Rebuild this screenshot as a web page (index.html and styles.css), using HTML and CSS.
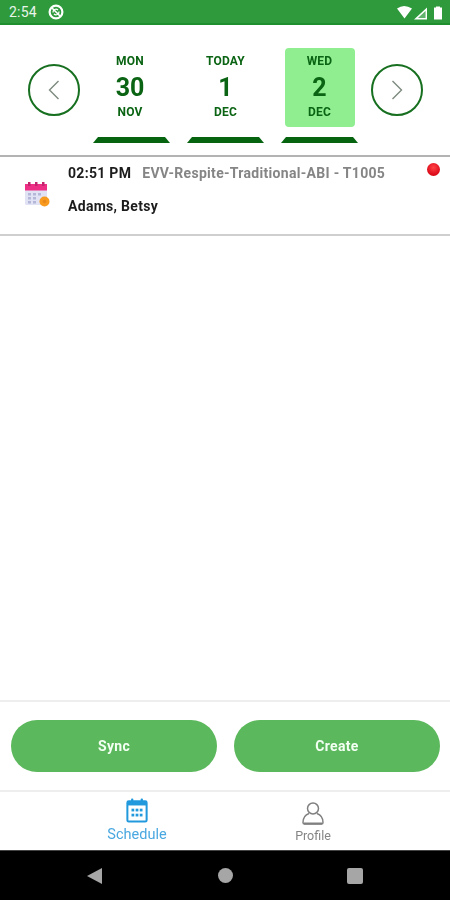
FILE: index.html
```html
<!DOCTYPE html>
<html lang="en">
<head>
<meta charset="utf-8">
<title>Schedule</title>
<link rel="stylesheet" href="styles.css">
</head>
<body>
<div class="screen">
  <div class="status">
    <span class="clock">2:54</span>
    <svg class="dnd" viewBox="0 0 16 16" width="16" height="16"><circle cx="8" cy="8" r="6.4" fill="none" stroke="#fff" stroke-width="2.200"/><path d="M3.500 3.500l9 9" stroke="#fff" stroke-width="1.600"/><path d="M5 8.500a3 3 0 0 1 5-2.500M11 7.500a3 3 0 0 1-5 2.500" fill="none" stroke="#fff" stroke-width="1.300"/></svg>
    <span class="status-fill"></span>
    <svg class="sys" viewBox="0 0 46 16" width="46" height="16"><path d="M1 4.500Q8-0.500 16 4.500L8.500 14.500Z" fill="#fff"/><path d="M31 3.500V15.500H18ZM29.500 7L22 14H29.500Z" fill="#fff" fill-rule="evenodd"/><path d="M29.500 7L22 14H29.500Z" fill="#fff" opacity=".25"/><path d="M38 3.500h2V2.500h4v1h2v12h-8Z" fill="#fff"/></svg>
  </div>

  <header class="dates">
    <button class="arrow"><svg viewBox="0 0 14 22" width="14" height="22"><path d="M11.500 2L2.500 11l9 9" fill="none" stroke="#7d8a7f" stroke-width="1.400"/></svg></button>
    <div class="day">
      <div class="card"><span class="small">MON</span><span class="num">30</span><span class="small">NOV</span></div>
      <div class="bar"></div>
    </div>
    <div class="day">
      <div class="card"><span class="small">TODAY</span><span class="num">1</span><span class="small">DEC</span></div>
      <div class="bar"></div>
    </div>
    <div class="day">
      <div class="card selected"><span class="small">WED</span><span class="num">2</span><span class="small">DEC</span></div>
      <div class="bar"></div>
    </div>
    <button class="arrow"><svg viewBox="0 0 14 22" width="14" height="22"><path d="M2.500 2L11.500 11l-9 9" fill="none" stroke="#7d8a7f" stroke-width="1.400"/></svg></button>
  </header>

  <section class="visit">
    <svg class="visit-icon" viewBox="0 0 26 26" width="26" height="26">
      <rect x="1" y="3" width="22" height="21" rx="1.500" fill="#e1e3f5"/>
      <rect x="1" y="3" width="22" height="6.500" fill="#ee2f86"/>
      <rect x="4" y="1" width="2.500" height="4" fill="#c2246d"/><rect x="11" y="1" width="2.500" height="4" fill="#c2246d"/><rect x="18" y="1" width="2.500" height="4" fill="#c2246d"/>
      <g fill="#b4b7d8"><rect x="4" y="12" width="3" height="2.500"/><rect x="9" y="12" width="3" height="2.500"/><rect x="14" y="12" width="3" height="2.500"/><rect x="4" y="16" width="3" height="2.500"/><rect x="9" y="16" width="3" height="2.500"/><rect x="4" y="20" width="3" height="2.500"/><rect x="9" y="20" width="3" height="2.500"/></g>
      <circle cx="20.500" cy="20.500" r="5" fill="#f79a1e"/><circle cx="20.500" cy="20.500" r="1.800" fill="#e8871a"/>
    </svg>
    <div class="visit-body">
      <div class="visit-top"><span class="time">02:51 PM</span><span class="service">EVV-Respite-Traditional-ABI - T1005</span></div>
      <div class="client">Adams, Betsy</div>
    </div>
    <span class="dot"></span>
  </section>

  <div class="spacer"></div>

  <div class="actions">
    <button class="action">Sync</button>
    <button class="action">Create</button>
  </div>

  <nav class="tabs">
    <div class="tab active">
      <svg viewBox="0 0 24 27" width="22" height="25"><rect x="1.500" y="3.500" width="21" height="22" rx="1.500" fill="none" stroke="#2299dd" stroke-width="2.200"/><rect x="1.500" y="3.500" width="21" height="4.500" fill="#2299dd"/><rect x="5.500" y="0.500" width="2.500" height="5" rx="1" fill="#2299dd"/><rect x="16" y="0.500" width="2.500" height="5" rx="1" fill="#2299dd"/><g fill="#2299dd"><rect x="6" y="11.500" width="3" height="3"/><rect x="10.500" y="11.500" width="3" height="3"/><rect x="15" y="11.500" width="3" height="3"/><rect x="6" y="17" width="3" height="3"/><rect x="10.500" y="17" width="3" height="3"/><rect x="15" y="17" width="3" height="3"/></g></svg>
      <span>Schedule</span>
    </div>
    <div class="tab">
      <svg viewBox="0 0 22 23" width="22" height="23"><circle cx="11" cy="6.500" r="5.500" fill="none" stroke="#808080" stroke-width="1.500"/><path d="M7 11.500C3 13 1 16.500 1 20.500Q1 22 2.500 22H19.500Q21 22 21 20.500C21 16.500 19 13 15 11.500" fill="none" stroke="#808080" stroke-width="1.500"/><path d="M2 21.500H20" stroke="#808080" stroke-width="2"/></svg>
      <span>Profile</span>
    </div>
  </nav>

  <div class="navbar">
    <svg viewBox="0 0 16 18" width="16" height="18"><path d="M16 1V17L1 9Z" fill="#a6a6a6"/></svg>
    <span class="home"></span>
    <span class="recent"></span>
  </div>
</div>
</body>
</html>
```
FILE: styles.css
```css
* { box-sizing: border-box; }
html, body { margin: 0; padding: 0; background: #fff; }
body { font-family: Roboto, "Liberation Sans", sans-serif; }
.screen { width: 450px; height: 900px; display: flex; flex-direction: column; overflow: hidden; filter: blur(0.45px); }

.status { height: 25px; background: #2e9a3c; border-bottom: 2px solid #1f8f2d; display: flex; align-items: center; padding: 0 9px; color: #e8f5ea; font-size: 14px; }
.clock { letter-spacing: 0.2px; }
.dnd { margin-left: 11px; }
.status-fill { flex: 1; }
.sys { margin-right: -1px; }

.dates { height: 130px; padding: 23px 0 0 28px; display: flex; align-items: flex-start; }
.arrow { width: 52px; height: 52px; margin-top: 16px; padding: 0; border: 2px solid #176f20; border-radius: 50%; background: #fff; display: flex; align-items: center; justify-content: center; flex: none; }
.day { width: 77px; margin-left: 17px; display: flex; flex-direction: column; align-items: center; }
.day:nth-child(2) { margin-left: 13px; }
.day:nth-child(2) .card { padding-right: 3px; }
.day + .arrow { margin-left: 12px; }
.day:nth-child(4) { margin-right: 1px; }
.card { width: 70px; height: 79px; border-radius: 4px; padding-top: 6px; display: flex; flex-direction: column; align-items: center; color: #0a6413; }
.card.selected { background: #90ee90; }
.small { font-size: 12px; font-weight: 700; line-height: 14px; letter-spacing: 0.2px; }
.num { font-size: 25px; font-weight: 700; line-height: 29px; margin: 5px 0 3px; }
.bar { width: 77px; height: 6px; margin-top: 10px; background: #066410; clip-path: polygon(5px 0, calc(100% - 5px) 0, 100% 100%, 0 100%); }

.visit { height: 81px; border-top: 2px solid #b3b3b3; border-bottom: 2px solid #cfcfcf; display: flex; align-items: flex-start; position: relative; }
.visit-icon { margin: 24px 0 0 24px; flex: none; }
.visit-body { margin-left: 18px; flex: 1; }
.visit-top { display: flex; padding-top: 8px; line-height: 16px; font-size: 14px; font-weight: 700; letter-spacing: 0.3px; }
.time { color: #1c1c1c; }
.service { margin-left: 11px; color: #858585; }
.client { margin-top: 17px; font-size: 14px; font-weight: 700; letter-spacing: 0.3px; line-height: 16px; color: #1c1c1c; }
.dot { position: absolute; right: 10px; top: 6px; width: 13px; height: 13px; border-radius: 50%; background: radial-gradient(circle at 50% 35%, #f44 0, #e01020 60%, #c00 100%); }

.spacer { flex: 1; }

.actions { height: 92px; border-top: 2px solid #eee; border-bottom: 2px solid #eee; padding: 17.500px 10px 0 11px; display: flex; justify-content: space-between; }
.action { width: 206px; height: 52px; border: 0; border-radius: 26px; background: #5cb85c; color: #f2fff2; font-family: Roboto, "Liberation Sans", sans-serif; font-size: 14px; font-weight: 700; letter-spacing: 0.3px; }

.tabs { height: 58px; display: flex; justify-content: center; }
.tab { width: 176px; display: flex; flex-direction: column; align-items: center; padding-top: 6px; font-size: 12.500px; line-height: 15px; color: #858585; }
.tab span { margin-top: 3px; }
.tab:last-child { padding-top: 10px; }
.tab.active { color: #4aa8e0; font-size: 14.500px; }
.tab.active span { margin-top: 4px; }

.navbar { height: 50px; background: #000; border-top: 1px solid #444; display: flex; align-items: center; }
.navbar svg { margin-left: 86px; }
.home { width: 15px; height: 15px; border-radius: 50%; background: #a6a6a6; margin-left: 116px; }
.recent { width: 16px; height: 16px; border-radius: 2px; background: #a6a6a6; margin-left: 114px; }
```
